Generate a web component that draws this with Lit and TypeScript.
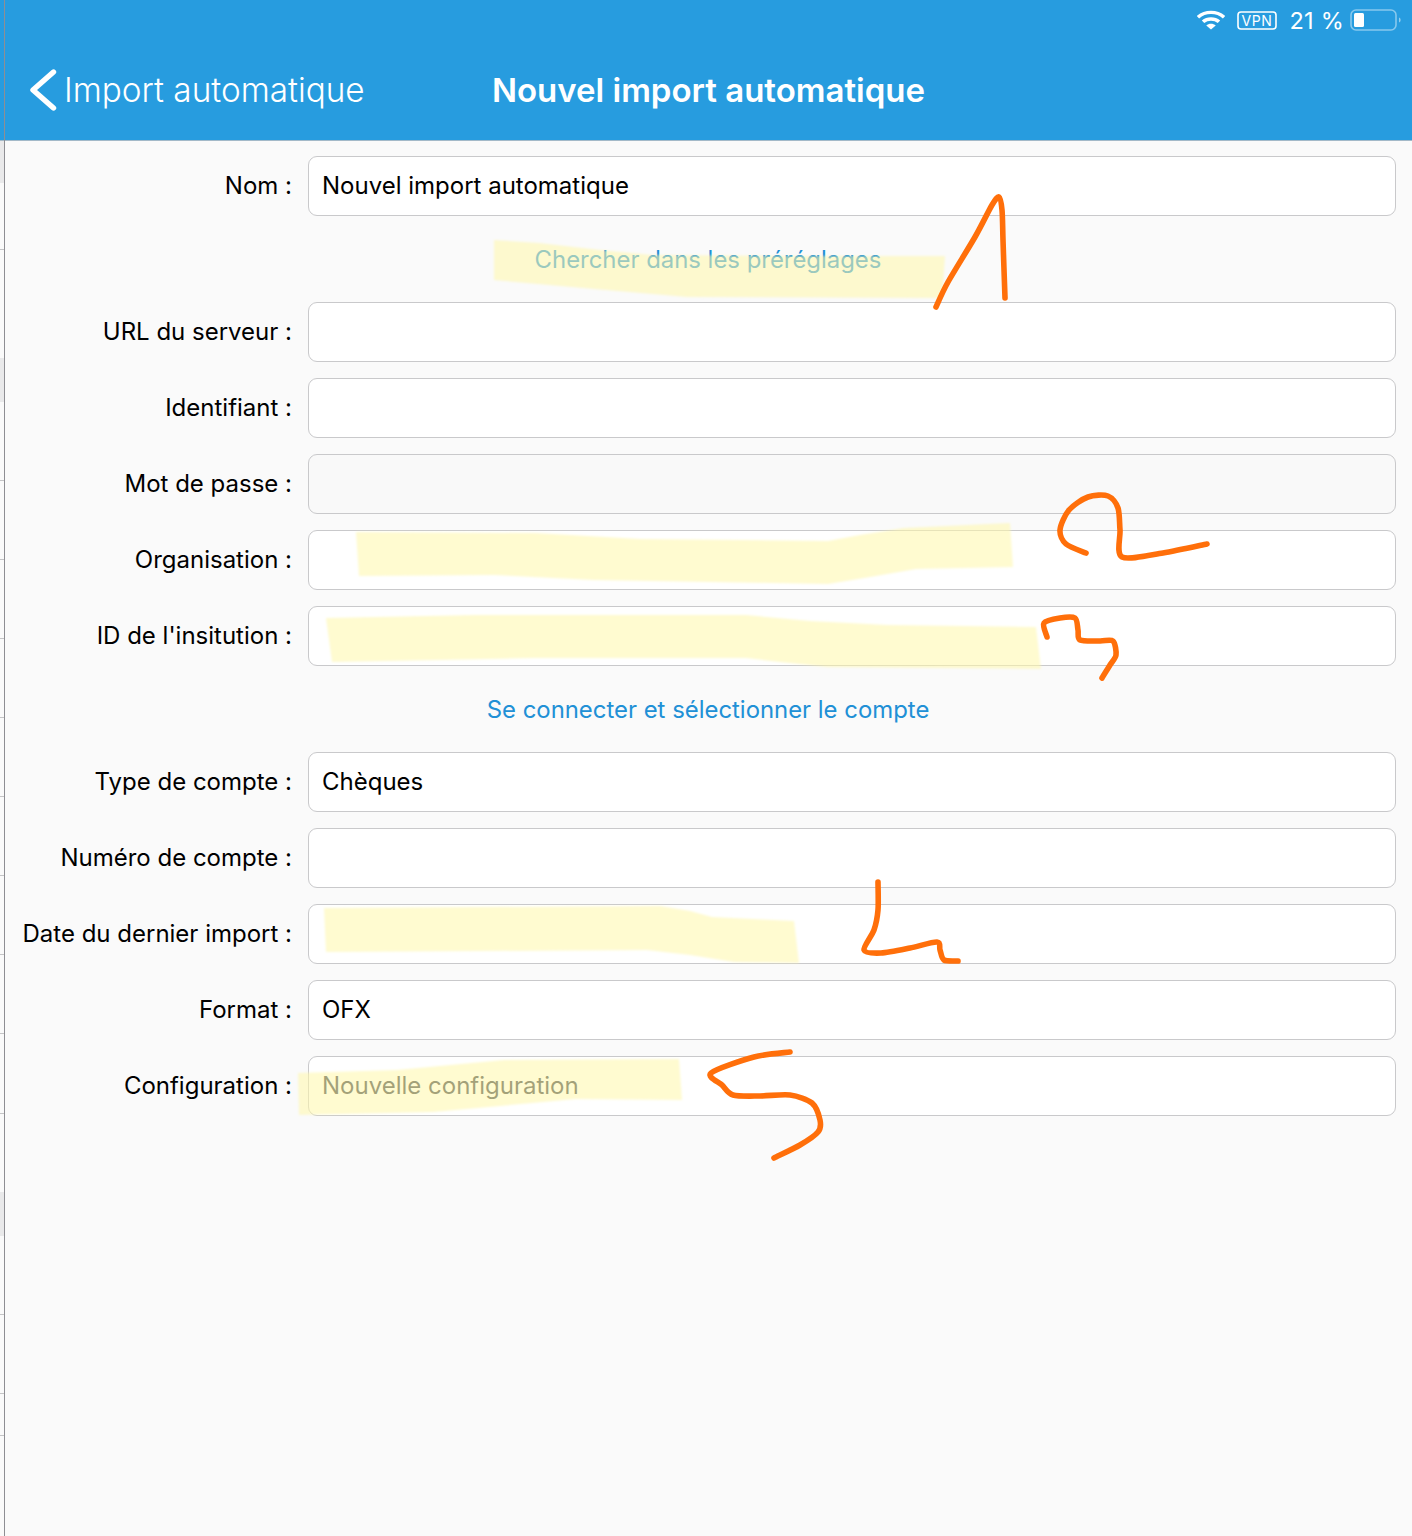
import { LitElement, html, css, svg } from "lit";
import { customElement } from "lit/decorators.js";

type Row =
  | { kind: "field"; label: string; value?: string; placeholder?: string; secure?: boolean }
  | { kind: "link"; text: string; dim?: boolean };

const ROWS: Row[] = [
  { kind: "field", label: "Nom :", value: "Nouvel import automatique" },
  { kind: "link", text: "Chercher dans les préréglages" },
  { kind: "field", label: "URL du serveur :" },
  { kind: "field", label: "Identifiant :" },
  { kind: "field", label: "Mot de passe :", secure: true },
  { kind: "field", label: "Organisation :" },
  { kind: "field", label: "ID de l'insitution :" },
  { kind: "link", text: "Se connecter et sélectionner le compte" },
  { kind: "field", label: "Type de compte :", value: "Chèques" },
  { kind: "field", label: "Numéro de compte :" },
  { kind: "field", label: "Date du dernier import :" },
  { kind: "field", label: "Format :", value: "OFX" },
  { kind: "field", label: "Configuration :", placeholder: "Nouvelle configuration" },
];

type P = [number, number];

const HIGHLIGHTS: P[][] = [
  [[494,240],[539,243],[600,250],[652,255],[790,256],[945,256],[942,298],[687,297],[583,288],[494,280]],
  [[356,532],[535,533],[640,539],[828,541],[860,535],[904,528],[1010,523],[1013,567],[916,569],[870,577],[828,584],[593,580],[494,575],[359,576]],
  [[326,618],[476,615],[746,615],[810,621],[887,625],[1036,627],[1041,669],[828,667],[780,662],[746,658],[535,658],[332,662]],
  [[324,908],[660,906],[690,911],[712,917],[794,921],[799,963],[734,962],[690,955],[647,950],[326,952]],
  [[298,1073],[397,1070],[504,1060],[679,1059],[682,1100],[576,1099],[433,1112],[299,1115]],
];

const STROKES: P[][] = [
  [[936,307],[948,282],[975,237],[992,205],[999,197],[1002,210],[1003,240],[1005,298]],
  [[1086,553],[1066,544],[1060,530],[1069,510],[1088,497],[1108,496],[1118,508],[1120,530],[1122,557],[1163,553],[1207,544]],
  [[1047,637],[1044,623],[1060,618],[1075,618],[1078,630],[1080,640],[1100,641],[1113,641],[1116,655],[1110,665],[1102,678]],
  [[878,882],[878,910],[874,930],[864,950],[881,953],[910,948],[937,942],[940,950],[944,960],[958,961]],
  [[790,1052],[754,1057],[711,1073],[722,1085],[733,1095],[760,1096],[790,1095],[812,1103],[820,1120],[818,1132],[800,1145],[774,1158]],
];

function polygon(pts: P[]): string {
  return "M" + pts.map(([x, y]) => `${x} ${y}`).join("L") + "Z";
}

function smooth(pts: P[]): string {
  const n = pts.length;
  const at = (i: number): P => pts[Math.max(0, Math.min(n - 1, i))];
  let d = `M${pts[0][0]} ${pts[0][1]}`;
  for (let i = 0; i < n - 1; i++) {
    const [a, b, c, e] = [at(i - 1), at(i), at(i + 1), at(i + 2)];
    const k = 7;
    d += `C${(b[0] + (c[0] - a[0]) / k).toFixed(1)} ${(b[1] + (c[1] - a[1]) / k).toFixed(1)} ${(c[0] - (e[0] - b[0]) / k).toFixed(1)} ${(c[1] - (e[1] - b[1]) / k).toFixed(1)} ${c[0]} ${c[1]}`;
  }
  return d;
}

const TICKS = [249, 480, 559, 638, 717, 796, 875, 954, 1033, 1113, 1314, 1393, 1435];
const SHADES: P[] = [[141, 42], [358, 44], [1192, 44]];

@customElement("app-root")
export class AppRoot extends LitElement {
  static styles = css`
    :host {
      display: block;
      position: relative;
      height: 1536px;
      overflow: hidden;
      background: #fafafa;
      font-family: Inter, "Liberation Sans", sans-serif;
      color: #000;
    }
    .shell { display: flex; height: 1536px; }
    .rail {
      position: relative;
      flex: 0 0 4px;
      border-right: 1px solid #8e8e93;
      background: #fafafa;
    }
    .rail-top { height: 140px; background: #279cdf; border-bottom: 1px solid #a3b9c8; }
    .shade { position: absolute; left: 0; width: 4px; background: #e9e9ea; }
    .tick { position: absolute; left: 0; width: 4px; height: 1px; background: #c4c4c6; }
    .main { flex: 1; min-width: 0; display: flex; flex-direction: column; }
    .head {
      height: 140px;
      box-sizing: content-box;
      background: #279cdf;
      border-bottom: 1px solid #a3b9c8;
      color: #fff;
      display: flex;
      flex-direction: column;
    }
    .status {
      height: 40px;
      display: flex;
      justify-content: flex-end;
      align-items: center;
      padding-right: 11px;
      font-size: 23.5px;
    }
    .status svg { display: block; }
    .wifi { margin-right: 12px; }
    .vpn { margin-right: 12px; }
    .pct { margin-right: 6px; letter-spacing: 0.25px; }
    .nav {
      flex: 1;
      display: grid;
      grid-template-columns: 1fr auto 1fr;
      align-items: center;
    }
    .back {
      display: flex;
      align-items: center;
      font-size: 33.3px;
      font-weight: 300;
      padding-left: 24px;
    }
    .back svg { margin-right: 5px; display: block; }
    .title { font-size: 33px; font-weight: 600; }
    .form { display: flex; flex-direction: column; padding: 15px 16px 0 0; }
    .row {
      display: flex;
      align-items: center;
      gap: 16px;
      margin-bottom: 16px;
    }
    .row.before-link { margin-bottom: 0; }
    .label {
      flex: 0 0 287px;
      text-align: right;
      font-size: 24px;
      line-height: 30px;
      white-space: nowrap;
    }
    .box {
      flex: 1;
      height: 60px;
      box-sizing: border-box;
      display: flex;
      align-items: center;
      padding: 0 13px 2px;
      background: #fff;
      border: 1px solid #c9c9cb;
      border-radius: 9px;
      font-size: 24px;
    }
    .box.secure { background: #f9f9f9; }
    .ph { color: #34373d; }
    .link {
      height: 86px;
      display: flex;
      align-items: center;
      justify-content: center;
      padding-left: 15px;
      padding-top: 1px;
      box-sizing: border-box;
      color: #2190d6;
      font-size: 23.9px;
    }
    .ink { position: absolute; inset: 0; width: 1412px; height: 1536px; pointer-events: none; }
    .hl { fill: #fff8aa; fill-opacity: 0.55; }
    .stroke {
      fill: none;
      stroke: #ff6f0a;
      stroke-width: 5.6;
      stroke-linecap: round;
      stroke-linejoin: round;
    }
  `;

  private renderRow(r: Row, i: number) {
    if (r.kind === "link") return html`<div class="link">${r.text}</div>`;
    const next = ROWS[i + 1];
    const cls = next && next.kind === "link" ? "row before-link" : "row";
    return html`<div class=${cls}>
      <div class="label">${r.label}</div>
      <div class="box ${r.secure ? "secure" : ""}">
        ${r.placeholder ? html`<span class="ph">${r.placeholder}</span>` : r.value ?? ""}
      </div>
    </div>`;
  }

  render() {
    return html`
      <div class="shell">
        <div class="rail">
          <div class="rail-top"></div>
          ${SHADES.map(([t, h]) => html`<div class="shade" style="top:${t}px;height:${h}px"></div>`)}
          ${TICKS.map((t) => html`<div class="tick" style="top:${t}px"></div>`)}
        </div>
        <div class="main">
          <header class="head">
            <div class="status">
              <svg class="wifi" width="28" height="20" viewBox="1 0 26 20" preserveAspectRatio="none" fill="none" stroke="#fff" stroke-width="3.4">
                <path d="M1.8 7.2C8.6 .8 19.4 .8 26.2 7.2" />
                <path d="M6.6 11.8C10.8 8 17.2 8 21.4 11.8" />
                <path d="M14 19.6 9.6 15.4C12 13.2 16 13.2 18.4 15.4Z" fill="#fff" stroke="none" />
              </svg>
              <svg class="vpn" width="40" height="19" viewBox="0 0 40 19">
                <rect x="1" y="1" width="38" height="17" rx="3" fill="none" stroke="#fff" stroke-width="1.6" />
                <text x="20" y="14.6" text-anchor="middle" font-size="14" letter-spacing="0.6" fill="#fff" font-family="Inter, sans-serif">VPN</text>
              </svg>
              <span class="pct">21 %</span>
              <svg width="51" height="22" viewBox="0 0 51 22">
                <rect x="1" y="1" width="45" height="20" rx="5" fill="none" stroke="#fff" stroke-opacity="0.45" stroke-width="1.6" />
                <rect x="4" y="4" width="10" height="14" rx="1.5" fill="#fff" />
                <path d="M49 8.5C50.2 9 50.6 10 50.6 11S50.2 13 49 13.5Z" fill="#fff" fill-opacity="0.5" />
              </svg>
            </div>
            <div class="nav">
              <div class="back">
                <svg width="30" height="42" viewBox="0 0 30 42" fill="none" stroke="#fff" stroke-width="5.4" stroke-linecap="round" stroke-linejoin="round">
                  <path d="M24.5 3 4 21 24.5 39" />
                </svg>
                Import automatique
              </div>
              <div class="title">Nouvel import automatique</div>
              <div></div>
            </div>
          </header>
          <div class="form">${ROWS.map((r, i) => this.renderRow(r, i))}</div>
        </div>
      </div>
      <svg class="ink" viewBox="0 0 1412 1536">
        <defs><filter id="soft" x="-5%" y="-20%" width="110%" height="140%"><feGaussianBlur stdDeviation="1.2" /></filter></defs>
        <g filter="url(#soft)">${HIGHLIGHTS.map((p) => svg`<path class="hl" d=${polygon(p)} />`)}</g>
        ${STROKES.map((p) => svg`<path class="stroke" d=${smooth(p)} />`)}
      </svg>
    `;
  }
}
